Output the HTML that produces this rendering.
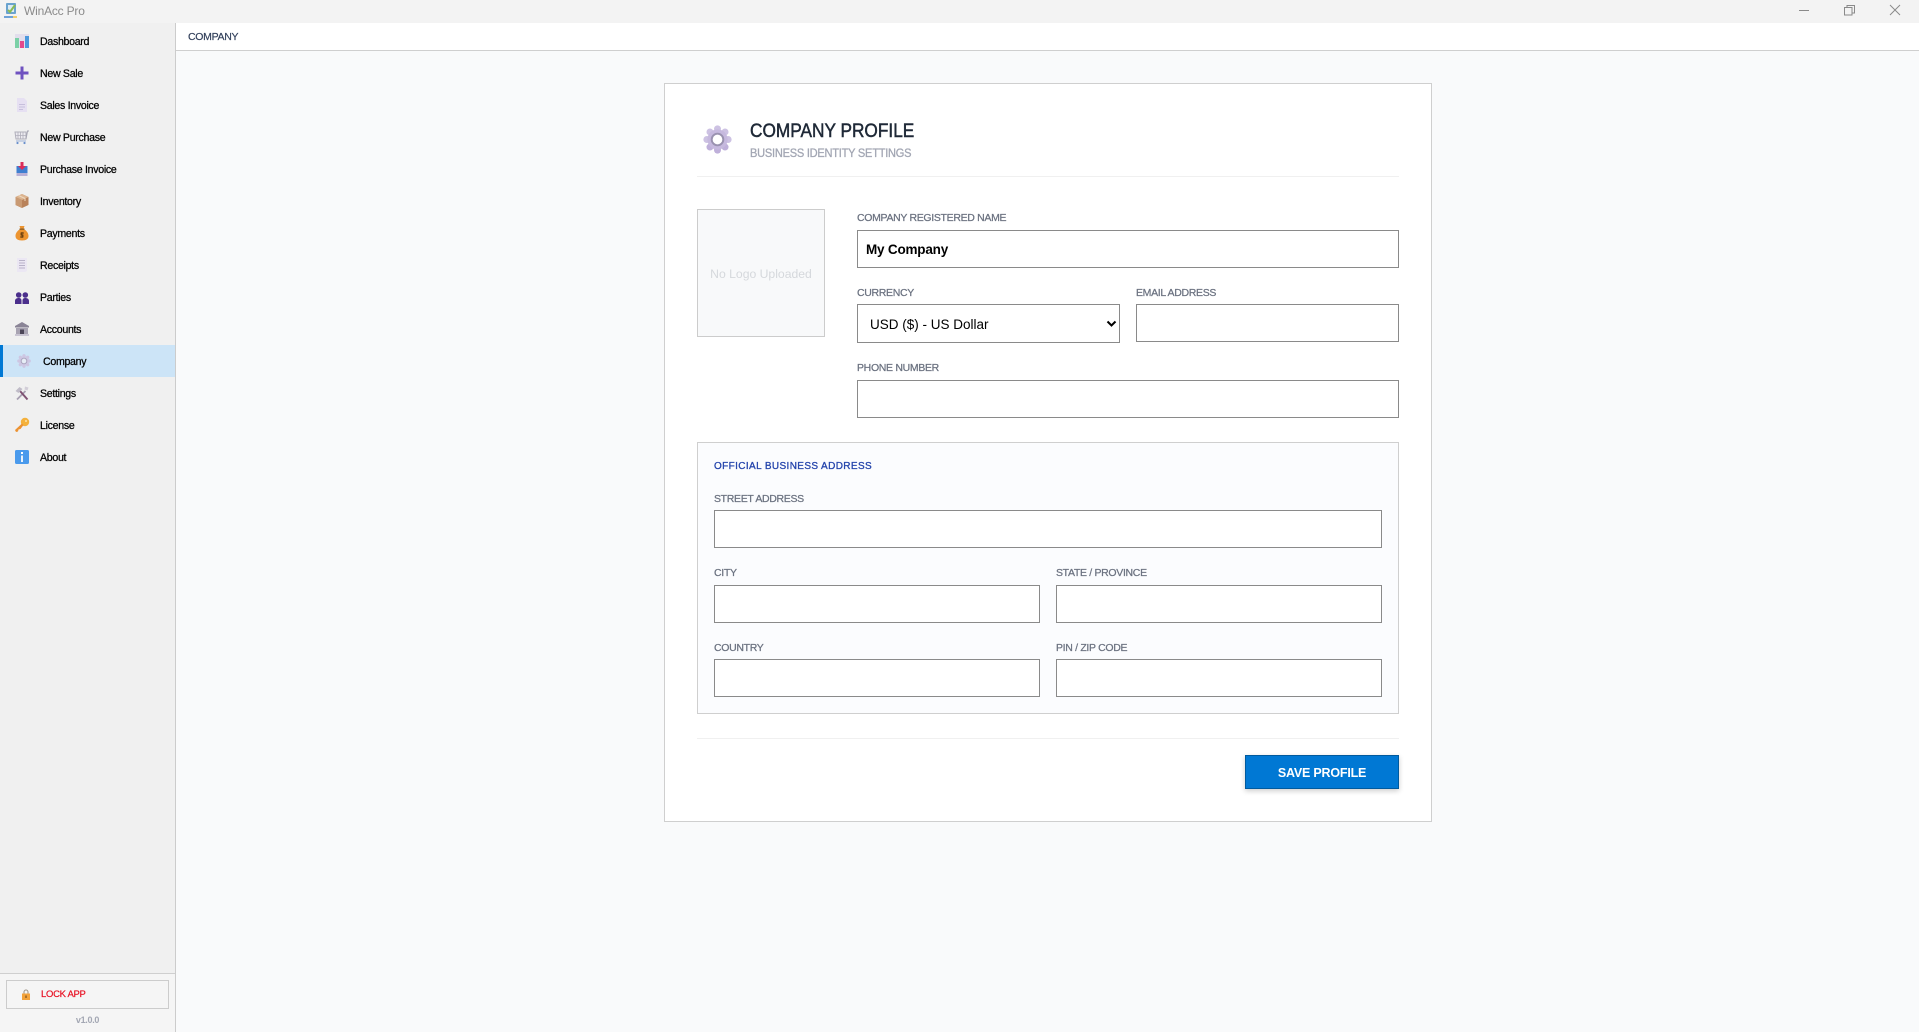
<!DOCTYPE html>
<html lang="en">
<head>
<meta charset="utf-8">
<title>WinAcc Pro</title>
<style>
*{box-sizing:border-box;margin:0;padding:0}
html,body{width:1919px;height:1032px;overflow:hidden;background:#f9fafb;font-family:"Liberation Sans",sans-serif}
#titlebar{position:absolute;left:0;top:0;width:1919px;height:23px;background:#f3f3f3}
#titlebar .t{position:absolute;left:24px;top:4px;font-size:12px;line-height:15px;letter-spacing:-.2px;color:#8b8b8b;white-space:nowrap}
#sidebar{position:absolute;left:0;top:23px;width:176px;height:1009px;background:#f0f0f0;border-right:1px solid #cccccc}
#main-head{position:absolute;left:176px;top:23px;width:1743px;height:28px;background:#fff;border-bottom:1px solid #cfcfcf}
#main-head span{position:absolute;left:12px;top:7px;font-size:10.5px;line-height:14px;letter-spacing:-.3px;color:#33415c;white-space:nowrap;-webkit-text-stroke:.2px #33415c}
.nav{position:absolute;left:0;width:175px;height:32px;font-size:10.6px;line-height:32px;letter-spacing:-.3px;color:#000;white-space:nowrap;-webkit-text-stroke:.25px #000}
.nav span{position:absolute;left:40px;top:1px}
.nav svg{position:absolute;left:14px;top:8px;width:16px;height:16px}
.nav.on{background:#cce4f7;border-left:3px solid #0078d4}
.nav.on span{left:40px}
.nav.on svg{left:14px;top:9px;width:14px;height:14px}
#foot{position:absolute;left:0;top:973px;width:175px;height:59px;background:#f5f5f5;border-top:1px solid #cfcfcf}
#lock{position:absolute;left:6px;top:980px;width:163px;height:29px;border:1px solid #cccccc;background:#f5f5f5}
#lock span{position:absolute;left:34px;top:6px;font-size:9.5px;line-height:16px;letter-spacing:-.3px;color:#e81123;white-space:nowrap;-webkit-text-stroke:.2px #e81123}
#lock svg{position:absolute;left:15px;top:8px;width:8px;height:11px}
#ver{position:absolute;left:0;width:175px;top:1013px;text-align:center;font-size:9px;line-height:14px;font-weight:700;letter-spacing:-.3px;color:#a3a7b3}
#card{position:absolute;left:664px;top:83px;width:768px;height:739px;background:#fff;border:1px solid #cfcfcf}
.x{position:absolute;white-space:nowrap}
.lab{position:absolute;font-size:10.5px;line-height:14px;letter-spacing:-.32px;color:#6b7280;white-space:nowrap;-webkit-text-stroke:.25px #6b7280}
.in{position:absolute;display:block;height:38px;background:#fff;border:1px solid #8a8a8a;border-radius:0;outline:0;font-family:"Liberation Sans",sans-serif;color:#000}
#sel{position:absolute;left:857px;top:304px;width:263px;height:39px;background:#fff;border:1px solid #8a8a8a;border-radius:0;appearance:none;-webkit-appearance:none;font:13.5px "Liberation Sans",sans-serif;color:#000;padding:2px 0 0 12px;outline:0}
</style>
</head>
<body>
<div id="titlebar">
  <svg style="position:absolute;left:2px;top:2px" width="17" height="18" viewBox="0 0 17 18">
    <rect x="4" y="1" width="10" height="11" fill="#6aa3cf" rx="1"/>
    <rect x="6" y="3" width="6" height="7" fill="#dcebf3"/>
    <path d="M6 8l2 2 5-7" fill="none" stroke="#8abb55" stroke-width="2"/>
    <rect x="2" y="14" width="9" height="2" fill="#6ea2d8"/>
    <rect x="11" y="14" width="4" height="2" fill="#f0cf70"/>
  </svg>
  <div class="t">WinAcc Pro</div>
  <svg style="position:absolute;left:1795px;top:0" width="124" height="23" viewBox="0 0 124 23" fill="none" stroke="#8a8a8a" stroke-width="1">
    <path d="M4 10.5H14"/>
    <path d="M49.5 7.5h7.5v7.5h-7.500z"/>
    <path d="M52 7.5V5.5h7.500v7.500H57"/>
    <path d="M95 5l10 10M105 5L95 15"/>
  </svg>
</div>

<div id="sidebar"></div>

<div class="nav" style="top:25px"><svg viewBox="0 0 16 16"><rect x="1" y="1" width="14" height="14" fill="#e2deec"/><rect x="1" y="5" width="4" height="10" fill="#7bd0a6"/><rect x="6" y="8" width="4" height="7" fill="#e2498c"/><rect x="11" y="3" width="4" height="12" fill="#4b98dc"/></svg><span>Dashboard</span></div>
<div class="nav" style="top:57px"><svg viewBox="0 0 16 16"><path d="M6.500 1.500h3v5h5v3h-5v5h-3v-5h-5v-3h5z" fill="#6f52c0"/></svg><span>New Sale</span></div>
<div class="nav" style="top:89px"><svg viewBox="0 0 16 16"><path d="M3 1h7l3 3v11H3z" fill="#e6e0f2"/><path d="M5 7h6v1H5zM5 9.500h6v1H5zM5 12h4v1H5z" fill="#c7bfdc"/></svg><span>Sales Invoice</span></div>
<div class="nav" style="top:121px"><svg viewBox="0 0 16 16"><path d="M1 3h11v7H2z" fill="#ecebf0" stroke="#b0afba" stroke-width="1"/><path d="M4 3.500v6M6.500 3.500v6M9 3.500v6M2 6.500h10" stroke="#b0afba" stroke-width=".8"/><path d="M12 10l1.500-8H15" fill="none" stroke="#a5a4b2" stroke-width="1"/><path d="M2 12h10" stroke="#9cb2d8"/><circle cx="3.500" cy="14" r="1.100" fill="#6a90cc"/><circle cx="10.500" cy="14" r="1.100" fill="#6a90cc"/></svg><span>New Purchase</span></div>
<div class="nav" style="top:153px"><svg viewBox="0 0 16 16"><path d="M2.500 5h11v8h-11z" fill="#3f7fd0"/><path d="M2.500 12h11v3h-11z" fill="#b8b0d6"/><path d="M6.500 1h3v4H12L8 9 4 5h2.500z" fill="#dd2c58"/></svg><span>Purchase Invoice</span></div>
<div class="nav" style="top:185px"><svg viewBox="0 0 16 16"><path d="M8 1l6.500 3v8L8 15 1.500 12V4z" fill="#b9825a"/><path d="M1.500 4L8 7l6.500-3L8 1z" fill="#dcb48f"/><path d="M8 7v8L1.500 12V4z" fill="#c99a73"/><path d="M4.500 2.500l6.500 3v2.500" fill="none" stroke="#eed8bf"/></svg><span>Inventory</span></div>
<div class="nav" style="top:217px"><svg viewBox="0 0 16 16"><path d="M5.500 1h5L9.500 4c3 1.500 5 4 5 7 0 3-2.500 4.500-6.500 4.500S1.500 14 1.500 11c0-3 2-5.500 5-7z" fill="#ec9430"/><rect x="5.500" y="3.500" width="5" height="1.300" fill="#8a5a20"/><path d="M10 8H7v2h2v2H6M8 7v6" fill="none" stroke="#6b3f10" stroke-width=".9"/></svg><span>Payments</span></div>
<div class="nav" style="top:249px"><svg viewBox="0 0 16 16"><path d="M3 1h10v13l-2 1H3z" fill="#ebe7f3"/><path d="M5 3h6v1H5zM5 5.500h6v1H5zM5 8h6v1H5zM5 10.500h6v1H5z" fill="#b8b2c8"/></svg><span>Receipts</span></div>
<div class="nav" style="top:281px"><svg viewBox="0 0 16 16"><circle cx="4.700" cy="6" r="2.800" fill="#4b2f8c"/><circle cx="11.300" cy="6" r="2.800" fill="#4b2f8c"/><path d="M1 15v-3c0-2 1.500-3 3.700-3s2.800 1 2.800 3v3zM8.500 15v-3c0-2 .8-3 2.800-3s3.700 1 3.700 3v3z" fill="#4b2f8c"/></svg><span>Parties</span></div>
<div class="nav" style="top:313px"><svg viewBox="0 0 16 16"><path d="M8 1l7 4v1.500H1V5z" fill="#8a8496"/><path d="M2 7h12v6H2z" fill="#a8a3b2"/><rect x="6" y="8.500" width="4" height="4.500" fill="#4c4658"/><rect x="1" y="13" width="14" height="2" fill="#c9c5d2"/></svg><span>Accounts</span></div>
<div class="nav on" style="top:345px"><svg viewBox="0 0 30 30"><g fill="#cdc6e2"><circle cx="26" cy="15" r="3.600"/><circle cx="22.800" cy="22.800" r="3.600"/><circle cx="15" cy="26" r="3.600"/><circle cx="7.200" cy="22.800" r="3.600"/><circle cx="4" cy="15" r="3.600"/><circle cx="7.200" cy="7.200" r="3.600"/><circle cx="15" cy="4" r="3.600"/><circle cx="22.800" cy="7.200" r="3.600"/><circle cx="15" cy="15" r="10.500"/></g><circle cx="15" cy="15" r="7" fill="#a8a2bc"/><circle cx="15" cy="15" r="5" fill="#e6edf6"/></svg><span>Company</span></div>
<div class="nav" style="top:377px"><svg viewBox="0 0 16 16"><path d="M3 14.500L11.500 6" stroke="#a8a0b2" stroke-width="1.800"/><path d="M13.500 14.500L6 6" stroke="#7f5272" stroke-width="2"/><path d="M1.500 6l4-4 3 2-4 4z" fill="#c0bcc8"/><path d="M11 1.500l3.500 1-1 3-3-1z" fill="#d2ced8"/></svg><span>Settings</span></div>
<div class="nav" style="top:409px"><svg viewBox="0 0 16 16"><circle cx="11" cy="5" r="4.200" fill="#f4b13c"/><path d="M8 6.500L1 13l1 2 2-.5.500-2 2-.5 3-4z" fill="#ec9232"/><circle cx="12" cy="4" r="1" fill="#fce3a8"/></svg><span>License</span></div>
<div class="nav" style="top:441px"><svg viewBox="0 0 16 16"><rect x="1" y="1" width="14" height="14" rx="1.500" fill="#4a9aec"/><rect x="7" y="3" width="2" height="2" fill="#fff"/><rect x="7" y="6.500" width="2" height="6.500" fill="#e8f2fc"/></svg><span>About</span></div>

<div id="foot"></div>
<div id="lock"><svg viewBox="0 0 8 11"><path d="M2 5V3a2 2 0 0 1 4 0v2" fill="none" stroke="#a09588" stroke-width="1.100"/><rect x="0" y="4.500" width="8" height="6.500" fill="#f3a23a"/><rect x="3.300" y="6.500" width="1.400" height="2.500" fill="#8a5a20"/></svg><span>LOCK APP</span></div>
<div id="ver">v1.0.0</div>

<div id="main-head"><span>COMPANY</span></div>

<div id="card"></div>
<svg style="position:absolute;left:703px;top:125px" width="29" height="29" viewBox="0 0 30 30"><g><circle cx="26" cy="15" r="3.600" fill="#cdc2e3"/><circle cx="22.800" cy="22.800" r="3.600" fill="#bfb0da"/><circle cx="15" cy="26" r="3.600" fill="#bfb0da"/><circle cx="7.200" cy="22.800" r="3.600" fill="#bfb0da"/><circle cx="4" cy="15" r="3.600" fill="#cdc2e3"/><circle cx="7.200" cy="7.200" r="3.600" fill="#cdc2e3"/><circle cx="15" cy="4" r="3.600" fill="#cdc2e3"/><circle cx="22.800" cy="7.200" r="3.600" fill="#cdc2e3"/><circle cx="15" cy="15" r="10.500" fill="#c6b9de"/></g><circle cx="15" cy="15" r="7" fill="#9a92b0"/><circle cx="15" cy="15" r="5" fill="#fff"/></svg>
<div class="x" style="left:750px;top:119px;font-size:19.5px;line-height:24px;color:#1f2937;-webkit-text-stroke:.5px #1f2937;transform:scaleX(.885);transform-origin:0 0">COMPANY PROFILE</div>
<div class="x" style="left:750px;top:146px;font-size:12px;line-height:15px;letter-spacing:-.25px;color:#a2a6b3;-webkit-text-stroke:.3px #a2a6b3;transform:scaleX(.92);transform-origin:0 0">BUSINESS IDENTITY SETTINGS</div>
<div style="position:absolute;left:697px;top:176px;width:702px;height:1px;background:#f0f0f0"></div>

<div style="position:absolute;left:697px;top:209px;width:128px;height:128px;background:#f8f9fa;border:1px solid #cccccc;text-align:center;font-size:12.2px;line-height:128px;color:#d5d8dc;white-space:nowrap">No Logo Uploaded</div>

<div class="lab" style="left:857px;top:211px">COMPANY REGISTERED NAME</div>
<input class="in" style="left:857px;top:230px;width:542px;padding-left:8px;font-size:13.5px;font-weight:700;letter-spacing:-.2px" value="My Company">

<div class="lab" style="left:857px;top:286px">CURRENCY</div>
<select id="sel"><option>USD ($) - US Dollar</option></select>
<svg style="position:absolute;left:1106px;top:320px" width="11" height="8" viewBox="0 0 11 8"><path d="M1.500 1.500L5.500 5.500L9.500 1.500" fill="none" stroke="#000" stroke-width="2"/></svg>

<div class="lab" style="left:1136px;top:286px">EMAIL ADDRESS</div>
<input class="in" style="left:1136px;top:304px;width:263px">

<div class="lab" style="left:857px;top:361px">PHONE NUMBER</div>
<input class="in" style="left:857px;top:380px;width:542px">

<div style="position:absolute;left:697px;top:442px;width:702px;height:272px;background:#fbfcfe;border:1px solid #cfcfcf"></div>
<div class="x" style="left:714px;top:459.500px;font-size:10px;line-height:14px;letter-spacing:.38px;color:#2444ac;-webkit-text-stroke:.3px #2444ac">OFFICIAL BUSINESS ADDRESS</div>

<div class="lab" style="left:714px;top:492px">STREET ADDRESS</div>
<input class="in" style="left:714px;top:510px;width:668px">

<div class="lab" style="left:714px;top:566px">CITY</div>
<input class="in" style="left:714px;top:585px;width:326px">
<div class="lab" style="left:1056px;top:566px">STATE / PROVINCE</div>
<input class="in" style="left:1056px;top:585px;width:326px">

<div class="lab" style="left:714px;top:641px">COUNTRY</div>
<input class="in" style="left:714px;top:659px;width:326px">
<div class="lab" style="left:1056px;top:641px">PIN / ZIP CODE</div>
<input class="in" style="left:1056px;top:659px;width:326px">

<div style="position:absolute;left:697px;top:738px;width:702px;height:1px;background:#f0f0f0"></div>
<button style="position:absolute;left:1245px;top:755px;width:154px;height:34px;background:#0078d4;border:1px solid #005a9e;border-radius:0;color:#fff;font:700 12.5px/34px 'Liberation Sans',sans-serif;letter-spacing:-.2px;box-shadow:0 2px 5px rgba(0,0,0,.2);padding:0;text-align:center">SAVE PROFILE</button>
</body>
</html>
